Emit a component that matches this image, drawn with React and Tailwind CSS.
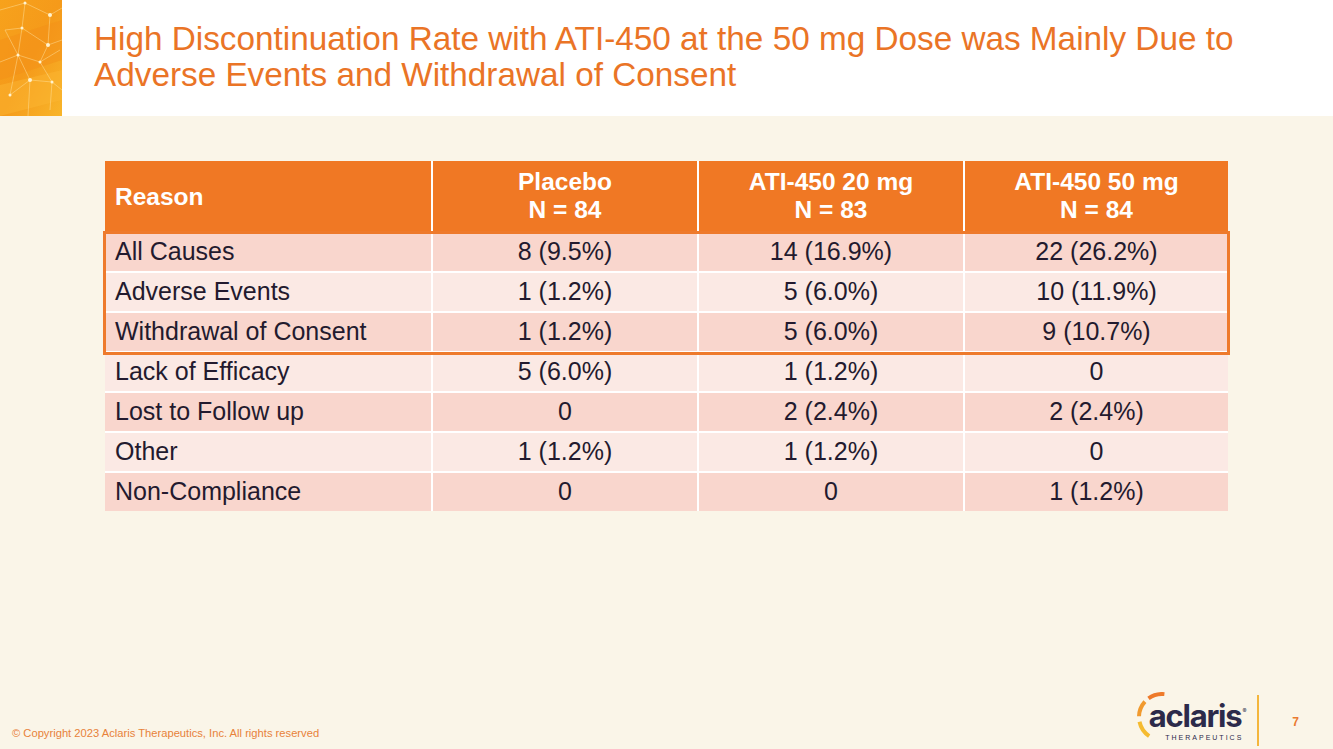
import React from "react";

const rows = [
  ["All Causes", "8 (9.5%)", "14 (16.9%)", "22 (26.2%)"],
  ["Adverse Events", "1 (1.2%)", "5 (6.0%)", "10 (11.9%)"],
  ["Withdrawal of Consent", "1 (1.2%)", "5 (6.0%)", "9 (10.7%)"],
  ["Lack of Efficacy", "5 (6.0%)", "1 (1.2%)", "0"],
  ["Lost to Follow up", "0", "2 (2.4%)", "2 (2.4%)"],
  ["Other", "1 (1.2%)", "1 (1.2%)", "0"],
  ["Non-Compliance", "0", "0", "1 (1.2%)"],
];

const HeaderArt = () => (
  <svg width="62" height="116" viewBox="0 0 62 116" className="block">
    <defs>
      <linearGradient id="hg" x1="0" y1="0" x2="1" y2="1">
        <stop offset="0" stopColor="#f7a21c" />
        <stop offset="0.5" stopColor="#f59a1a" />
        <stop offset="1" stopColor="#f8b52a" />
      </linearGradient>
    </defs>
    <rect width="62" height="116" fill="url(#hg)" />
    <polygon points="0,40 62,20 62,60 0,80" fill="#f39018" opacity="0.5" />
    <polygon points="0,85 62,70 62,100 0,116" fill="#fbb632" opacity="0.5" />
    <g stroke="#ffe2a0" strokeWidth="0.6" opacity="0.8" fill="none">
      <path d="M0 10 L25 3 L50 15 L62 8" />
      <path d="M5 30 L22 28 L48 45 L62 40" />
      <path d="M0 62 L18 55 L40 62 L60 50" />
      <path d="M10 95 L30 80 L52 82 L62 90" />
      <path d="M25 3 L22 28 L18 55 L30 80 L28 116" />
      <path d="M50 15 L48 45 L40 62 L52 82 L50 110" />
      <path d="M5 30 L18 55 L10 95" />
    </g>
    <g fill="#fff3cf">
      <circle cx="25" cy="3" r="1.5" />
      <circle cx="50" cy="15" r="2" />
      <circle cx="22" cy="28" r="1.5" />
      <circle cx="48" cy="45" r="2" />
      <circle cx="18" cy="55" r="1.5" />
      <circle cx="40" cy="62" r="1.5" />
      <circle cx="30" cy="80" r="2" />
      <circle cx="52" cy="82" r="1.5" />
      <circle cx="10" cy="95" r="1.5" />
    </g>
  </svg>
);

// arc segment around a centre, angles in degrees (y down)
const arc = (cx, cy, r, a1, a2) => {
  const p = (a) => [cx + r * Math.cos((a * Math.PI) / 180), cy + r * Math.sin((a * Math.PI) / 180)];
  const [x1, y1] = p(a1);
  const [x2, y2] = p(a2);
  return `M${x1.toFixed(2)} ${y1.toFixed(2)} A${r} ${r} 0 0 0 ${x2.toFixed(2)} ${y2.toFixed(2)}`;
};

const AclarisLogo = () => (
  <div className="flex items-start">
    <svg width="30" height="50" viewBox="0 0 30 50" className="-mr-[16px] shrink-0">
      <path d={arc(27, 25, 23, 276, 234)} stroke="#ee7a2a" strokeWidth="4" fill="none" />
      <path d={arc(27, 25, 23, 222, 182)} stroke="#f19a2e" strokeWidth="4" fill="none" />
      <path d={arc(27, 25, 23, 168, 124)} stroke="#f5bb30" strokeWidth="4" fill="none" />
    </svg>
    <div className="flex flex-col items-end pt-[9px]">
      <div className="text-[31px] leading-[30px] font-bold tracking-[-1.2px] text-[#2c2a4a] font-['Inter',sans-serif]">
        aclaris<sup className="text-[6px] font-normal align-super ml-[1px]">®</sup>
      </div>
      <div className="text-[7px] leading-[10px] tracking-[2px] text-[#2c2a4a] font-['Liberation_Sans',sans-serif] mt-[2px] pr-[2px]">
        THERAPEUTICS
      </div>
    </div>
  </div>
);

export default function App() {
  return (
    <div className="w-[1333px] h-[749px] bg-[#faf5e8] flex flex-col overflow-hidden font-['Liberation_Sans',Arial,sans-serif]">
      <div className="h-[116px] bg-white flex shrink-0">
        <HeaderArt />
        <h1 className="pl-[32px] pt-[21px] text-[33.3px] leading-[36px] text-[#ea7426]">
          High Discontinuation Rate with ATI-450 at the 50 mg Dose was Mainly Due to
          <br />
          Adverse Events and Withdrawal of Consent
        </h1>
      </div>

      <div className="pl-[105px] pt-[45px]">
        <div className="relative w-[1123px]">
          <div className="grid grid-cols-[326px_264px_264px_263px] gap-[2px] bg-white">
            <div className="h-[70px] bg-[#f07824] text-white font-bold text-[24.5px] flex items-center px-[10px] pt-[2px]">
              Reason
            </div>
            {[
              ["Placebo", "N = 84"],
              ["ATI-450 20 mg", "N = 83"],
              ["ATI-450 50 mg", "N = 84"],
            ].map((h, i) => (
              <div
                key={i}
                className="h-[70px] bg-[#f07824] text-white font-bold text-[24.5px] leading-[28px] flex flex-col items-center justify-center"
              >
                <span>{h[0]}</span>
                <span>{h[1]}</span>
              </div>
            ))}
            {rows.map((r, ri) =>
              r.map((c, ci) => (
                <div
                  key={ri + "-" + ci}
                  className={
                    "h-[38px] flex items-center text-[25px] text-[#231a2e] " +
                    (ri % 2 === 0 ? "bg-[#f9d6cd] " : "bg-[#fbe9e4] ") +
                    (ci === 0 ? "px-[10px]" : "justify-center")
                  }
                >
                  {c}
                </div>
              ))
            )}
          </div>
          <div className="absolute left-[-2px] right-[-2px] top-[70px] h-[124px] border-[3px] border-[#ee7a2c] pointer-events-none" />
        </div>
      </div>

      <div className="mt-auto flex items-end justify-between pl-[12px] pr-[34px] pb-[6px]">
        <div className="text-[11.2px] text-[#e8823a] mb-[1px]">
          © Copyright 2023 Aclaris Therapeutics, Inc. All rights reserved
        </div>
        <div className="flex items-center">
          <AclarisLogo />
          <div className="w-[2px] h-[51px] bg-[#f4b63c] ml-[12px] -mb-[6px]" />
          <div className="text-[12px] font-bold text-[#ea7a30] ml-[33px] mt-[8px]">7</div>
        </div>
      </div>
    </div>
  );
}
